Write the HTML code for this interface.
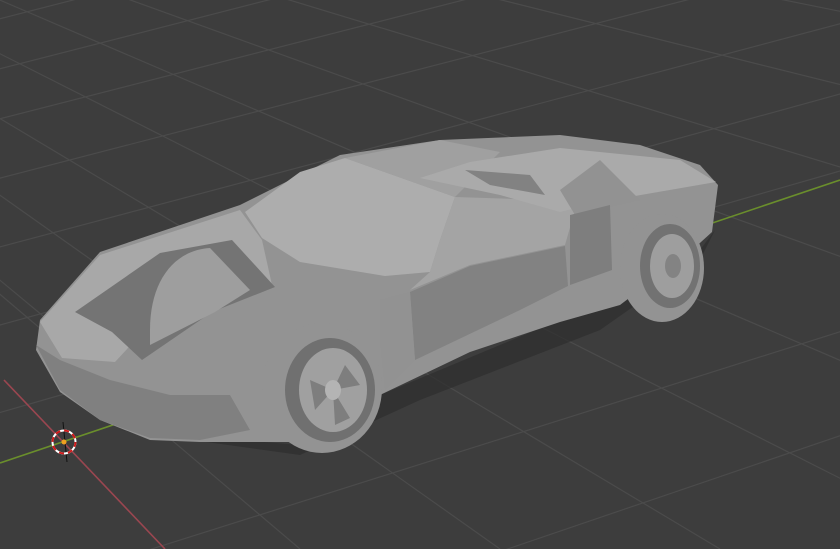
<!DOCTYPE html>
<html><head><style>html,body{margin:0;padding:0;background:#3d3d3d;overflow:hidden;width:840px;height:549px}svg{display:block}</style></head>
<body>
<svg width="840" height="549" viewBox="0 0 840 549" xmlns="http://www.w3.org/2000/svg">
<rect width="840" height="549" fill="#3d3d3d"/>
<g stroke="#4b4b4b" stroke-width="1.2" fill="none">
<line x1="-200" y1="120" x2="3000" y2="-700"/>
<line x1="-200" y1="170" x2="3000" y2="-650"/>
<line x1="-200" y1="230" x2="3000" y2="-600"/>
<line x1="-200" y1="300" x2="3000" y2="-550"/>
<line x1="-200" y1="380" x2="3000" y2="-500"/>
<line x1="-200" y1="470" x2="3000" y2="-450"/>
<line x1="-200" y1="660" x2="3000" y2="-350"/>
<line x1="-200" y1="790" x2="3000" y2="-300"/>
<line x1="-200" y1="940" x2="3000" y2="-250"/>
<line x1="-200" y1="1120" x2="3000" y2="-200"/>
<line x1="-200" y1="1340" x2="3000" y2="-150"/>
<line x1="-200" y1="1600" x2="3000" y2="-100"/>
<line x1="-200" y1="70" x2="3000" y2="-750"/>
<line x1="-200" y1="25" x2="3000" y2="-800"/>
<line x1="-700" y1="-300" x2="-40" y2="549"/>
<line x1="-700" y1="-300" x2="60" y2="330"/>
<line x1="-700" y1="-300" x2="300" y2="549"/>
<line x1="-700" y1="-300" x2="500" y2="549"/>
<line x1="-700" y1="-300" x2="720" y2="549"/>
<line x1="-700" y1="-300" x2="980" y2="549"/>
<line x1="-700" y1="-300" x2="1280" y2="549"/>
<line x1="-700" y1="-300" x2="1650" y2="549"/>
<line x1="-700" y1="-300" x2="2100" y2="549"/>
<line x1="-700" y1="-300" x2="2700" y2="549"/>
<line x1="-700" y1="-300" x2="3500" y2="549"/>
</g>
<line x1="4" y1="380" x2="165" y2="549" stroke="#9a4650" stroke-width="1.6"/>
<line x1="0" y1="463" x2="840" y2="180" stroke="#6a8e2c" stroke-width="1.6"/>
<polygon points="120,430 300,455 420,400 600,330 700,260 715,230 700,250 560,320 380,395 300,445" fill="#2e2e2e" opacity="0.7"/>
<polygon points="40,320 100,252 240,205 340,155 440,140 560,135 640,145 700,165 718,185 712,232 690,252 620,305 560,322 470,352 380,395 300,442 200,442 150,440 100,420 60,392 36,350" fill="#939393"/>
<polygon points="36,345 60,390 100,420 150,438 200,440 250,430 230,395 170,395 110,380 60,360" fill="#808080"/>
<polygon points="40,322 100,255 240,210 262,240 272,285 220,302 140,335 115,362 62,358" fill="#a8a8a8"/>
<polygon points="75,312 160,253 232,240 275,287 212,312 142,360 112,332" fill="#747474"/>
<path d="M150,330 C150,280 175,250 210,248 L250,290 L215,312 L150,345 Z" fill="#9e9e9e"/>
<polygon points="245,212 300,172 345,158 455,197 440,240 430,272 385,276 300,262 262,238" fill="#adadad"/>
<polygon points="345,158 440,140 500,152 455,197" fill="#a0a0a0"/>
<polygon points="455,197 440,240 430,272 410,290 470,265 565,245 575,210 545,200" fill="#a4a4a4"/>
<polygon points="410,292 470,266 565,246 568,286 520,310 415,360" fill="#828282"/>
<polygon points="380,300 410,292 415,360 385,390 380,340" fill="#929292"/>
<polygon points="420,178 470,162 560,148 680,160 716,182 600,202 560,212 500,195" fill="#aaaaaa"/>
<polygon points="465,170 530,175 545,195 490,185" fill="#828282"/>
<polygon points="560,190 600,160 640,200 575,215" fill="#929292"/>
<polygon points="570,215 610,205 612,270 570,285" fill="#7e7e7e"/>
<ellipse cx="662" cy="268" rx="42" ry="54" fill="#939393"/>
<ellipse cx="670" cy="266" rx="30" ry="42" fill="#727272"/>
<ellipse cx="672" cy="266" rx="22" ry="32" fill="#9e9e9e"/>
<ellipse cx="673" cy="266" rx="8" ry="12" fill="#838383"/>
<ellipse cx="322" cy="388" rx="60" ry="65" fill="#939393"/>
<ellipse cx="330" cy="390" rx="45" ry="52" fill="#707070"/>
<ellipse cx="333" cy="390" rx="34" ry="42" fill="#a0a0a0"/>
<polygon points="310,380 333,390 315,410" fill="#7e7e7e"/>
<polygon points="345,365 333,390 360,385" fill="#7e7e7e"/>
<polygon points="333,390 335,425 350,418" fill="#7e7e7e"/>
<ellipse cx="333" cy="390" rx="8" ry="10" fill="#b4b4b4"/>
<line x1="63" y1="422" x2="67" y2="462" stroke="#111" stroke-width="1"/>
<circle cx="64" cy="442" r="11.5" fill="none" stroke="#fff" stroke-width="2"/>
<circle cx="64" cy="442" r="11.5" fill="none" stroke="#d01818" stroke-width="2" stroke-dasharray="5 4"/>
<circle cx="64" cy="442" r="2.5" fill="#f0a020"/>
</svg>
</body></html>
